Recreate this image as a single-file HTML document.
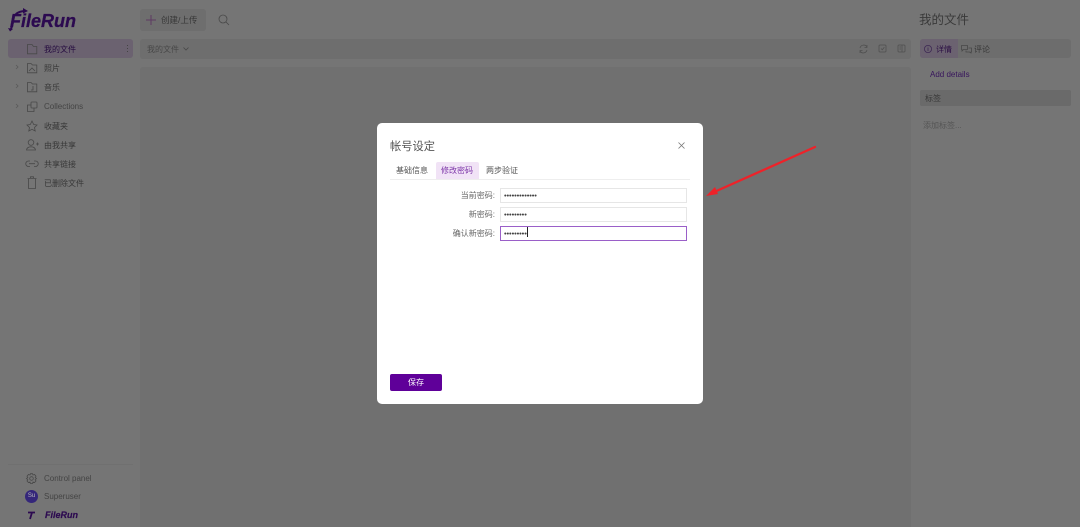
<!DOCTYPE html>
<html lang="zh"><head><meta charset="utf-8"><title>FileRun</title>
<style>
html,body{margin:0;padding:0}
body{width:1080px;height:527px;overflow:hidden;position:relative;background:#757575;font-family:"Liberation Sans","Noto Sans CJK SC",sans-serif;color:#3a3a3a}
#w{position:absolute;left:0;top:0;width:1080px;height:527px;filter:blur(.3px)}
.a{position:absolute}
.t{position:absolute;font-size:8px;line-height:14px;white-space:nowrap;color:#383838}
svg{position:absolute;overflow:visible;fill:none}
.i{stroke:#484848;stroke-width:.8}
.in{position:absolute;left:123px;height:13px;border:1px solid #e6e6e6;font-size:7.500px;line-height:14px;color:#444;padding-left:3px;letter-spacing:-.1px;width:182px}
.l{position:absolute;right:208px;font-size:8px;line-height:14px;color:#666;white-space:nowrap}
</style></head><body><div id="w">

<!-- logo -->
<div class="t" style="left:10px;top:11px;font:italic bold 18px/20px 'Liberation Sans',sans-serif;color:#2c0a50;-webkit-text-stroke:.3px #2c0a50">FileRun</div>
<svg style="left:0;top:0" width="40" height="35"><path d="M15 16 Q16 12 24 11" stroke="#2c0a50" stroke-width="2"/><path d="M23 8 L28 11 L23 13.500Z" fill="#2c0a50"/><path d="M12 26 L11 29" stroke="#2c0a50" stroke-width="2"/><path d="M8 28 L13 29 L10 31.500Z" fill="#2c0a50"/></svg>

<!-- sidebar -->
<div class="a" style="left:8px;top:39px;width:125px;height:19px;background:#6b6270;border-radius:3px"></div>
<div class="t" style="left:44px;top:43px;color:#260c40">我的文件</div>
<div class="a" style="left:126.500px;top:45px;width:1.200px;height:1.200px;background:#444;box-shadow:0 3px #444,0 6px #444"></div>
<div class="t" style="left:44px;top:62px">照片</div>
<div class="t" style="left:44px;top:81px">音乐</div>
<div class="t" style="left:44px;top:100px;color:#444">Collections</div>
<div class="t" style="left:44px;top:120px">收藏夹</div>
<div class="t" style="left:44px;top:139px">由我共享</div>
<div class="t" style="left:44px;top:158px">共享链接</div>
<div class="t" style="left:44px;top:177px">已删除文件</div>

<svg style="left:0;top:0" width="50" height="195" class="i">
<path d="M27.500 44.500 H32 L33.500 46.500 H36.800 V53.800 H27.500Z"/>
<path d="M27.500 63.500 H31 L32.500 65 H36.800 V72.800 H27.500Z M29 71 L32 68 L35 71"/>
<path d="M27.500 82.500 H31 L32.500 84 H36.800 V91.800 H27.500Z M33 86 V90 H31"/>
<path d="M31 105 H27.500 V111.500 H34 V108"/><rect x="31" y="102" width="6" height="6" rx=".8"/>
<path d="M32 121 L33.700 124.500 L37 125 L34.500 127.500 L35.200 131 L32 129.300 L28.800 131 L29.500 127.500 L27 125 L30.300 124.500Z"/>
<circle cx="31" cy="142.500" r="2.800"/><path d="M26.500 150 Q27 146.800 31 146.800 Q35 146.800 35.500 150Z M36 144 H39 M37.500 142.500 V145.500"/>
<path d="M30 161 H28.500 A2.700 2.700 0 0 0 28.500 166.500 H30 M34 161 H35.500 A2.700 2.700 0 0 1 35.500 166.500 H34 M29 163.700 H35"/>
<path d="M28.500 179 V188.500 H35.500 V179 M27.500 178.500 H36.500 M30.500 178 V176.800 H33.500 V178"/>
<path d="M16 65 L18 67 L16 69 M16 84 L18 86 L16 88 M16 104 L18 106 L16 108" stroke="#5a5a5a"/>
</svg>

<div class="a" style="left:8px;top:464px;width:125px;height:1px;background:#707070"></div>
<svg style="left:26px;top:473px" width="12" height="12" class="i"><circle cx="5.500" cy="5.500" r="1.800"/><path d="M4.500 .7 H6.500 L7 2 L8.500 1.500 L10 3.200 L9.200 4.500 L10.500 5.500 L9.200 6.700 L10 8 L8.500 9.500 L7 9 L6.500 10.500 H4.500 L4 9 L2.500 9.500 L1 8 L1.800 6.700 L.5 5.500 L1.800 4.500 L1 3.200 L2.500 1.500 L4 2Z"/></svg>
<div class="t" style="left:44px;top:472px;color:#444">Control panel</div>
<div class="a" style="left:25px;top:490px;width:13px;height:13px;border-radius:50%;background:#34267a;color:#bbb;font-size:6px;line-height:13px;text-align:center">Su</div>
<div class="t" style="left:44px;top:490px;color:#444">Superuser</div>
<svg style="left:27px;top:511px" width="10" height="9"><path d="M1 1.500 H8 M5 1.500 L3 8" stroke="#2c0a50" stroke-width="1.800"/></svg>
<div class="t" style="left:45px;top:509px;font:italic bold 9px/13px 'Liberation Sans',sans-serif;color:#2c0a50;-webkit-text-stroke:.2px #2c0a50">FileRun</div>

<!-- toolbar -->
<div class="a" style="left:140px;top:9px;width:66px;height:22px;background:#6e6e6e;border-radius:3px"></div>
<svg style="left:146px;top:15px" width="10" height="10"><path d="M5 0 V10 M0 5 H10" stroke="#5e3a63" stroke-width="1"/></svg>
<div class="t" style="left:161px;top:13px;font-size:8.500px">创建/上传</div>
<svg style="left:218px;top:14px" width="12" height="12" class="i"><circle cx="5" cy="5" r="4"/><path d="M8 8 L11 11"/></svg>

<div class="a" style="left:140px;top:39px;width:771px;height:20px;background:#6e6e6e;border-radius:3px"></div>
<div class="t" style="left:147px;top:43px;color:#484848">我的文件</div>
<svg style="left:183px;top:47px" width="6" height="4" stroke="#484848" stroke-width=".8"><path d="M.5 .5 L3 3 L5.500 .5"/></svg>
<svg style="left:859px;top:44px" width="50" height="10" stroke="#505050" stroke-width=".8">
<path d="M1 4 A3.800 3.800 0 0 1 8 3 M8 6 A3.800 3.800 0 0 1 1 7 M8 1 V3.500 H5.500 M1 9 V6.500 H3.500"/>
<rect x="20" y="1" width="7" height="7" rx="1"/><path d="M22 4.500 L23.300 5.800 L25.300 3.300"/>
<rect x="39" y="1" width="7" height="7" rx="1"/><path d="M43 1 V8 M40.500 3 H42 M40.500 5 H42"/>
</svg>
<div class="a" style="left:140px;top:67px;width:771px;height:460px;background:#707070;border-radius:3px 3px 0 0"></div>

<!-- right panel -->
<div class="t" style="left:919px;top:12px;font-size:12.500px;line-height:17px;color:#3a3a3a">我的文件</div>
<div class="a" style="left:920px;top:39px;width:151px;height:19px;background:#6d6d6d;border-radius:3px"></div>
<div class="a" style="left:920px;top:39px;width:38px;height:19px;background:#6b6270;border-radius:3px 0 0 3px"></div>
<svg style="left:924px;top:45px" width="8" height="8" stroke="#3f2a55" stroke-width=".8"><circle cx="4" cy="4" r="3.600"/><path d="M4 3 V6 M4 1.800 V2.500"/></svg>
<div class="t" style="left:936px;top:43px;color:#2c1045">详情</div>
<svg style="left:961px;top:45px" width="12" height="9" class="i"><path d="M.5 .5 H6.500 V4.500 H2.500 L1 6 V4.500 H.5Z M7.500 3 H10.500 V7 H10 V8 L8.500 7 H5 V5.500"/></svg>
<div class="t" style="left:974px;top:43px">评论</div>
<div class="t" style="left:930px;top:68px;color:#37145c">Add details</div>
<div class="a" style="left:920px;top:90px;width:151px;height:16px;background:#6a6a6a;border-radius:2px"></div>
<div class="t" style="left:925px;top:92px">标签</div>
<div class="t" style="left:923px;top:119px;color:#555">添加标签...</div>

<!-- dialog -->
<div class="a" style="left:377px;top:123px;width:326px;height:281px;background:#fff;border-radius:5px;overflow:hidden">
  <div class="t" style="left:13px;top:15px;font-size:11.250px;line-height:18px;color:#555">帐号设定</div>
  <svg style="left:301px;top:19px" width="7" height="7" stroke="#777" stroke-width=".8"><path d="M.5 .5 L6.500 6.500 M6.500 .5 L.5 6.500"/></svg>
  <div class="a" style="left:13px;top:56px;width:300px;height:1px;background:#eee"></div>
  <div class="a" style="left:59px;top:39px;width:43px;height:17px;background:#f1e3f6;border-radius:2px 2px 0 0"></div>
  <div class="t" style="left:19px;top:41px;color:#555">基础信息</div>
  <div class="t" style="left:64px;top:41px;color:#7c35a8">修改密码</div>
  <div class="t" style="left:109px;top:41px;color:#555">两步验证</div>

  <div class="l" style="top:66px">当前密码:</div>
  <div class="l" style="top:85px">新密码:</div>
  <div class="l" style="top:104px">确认新密码:</div>
  <div class="in" style="top:65px">•••••••••••••</div>
  <div class="in" style="top:84px">•••••••••</div>
  <div class="in" style="top:103px;border-color:#9a5fc8">•••••••••<span style="display:inline-block;width:1px;height:10px;background:#222;vertical-align:-1px;margin-left:.5px"></span></div>

  <div class="a" style="left:13px;top:251px;width:52px;height:17px;background:#5f0099;border-radius:2px;color:#fff;font-size:8px;line-height:17px;text-align:center">保存</div>
</div>

<!-- annotation arrow -->
<svg style="left:0;top:0" width="1080" height="527"><path d="M815 147 L712 193" stroke="#ee2229" stroke-width="2.300" stroke-linecap="round"/><path d="M706 196 L715 187 L718 194Z" fill="#ee2229"/></svg>

</div></body></html>
